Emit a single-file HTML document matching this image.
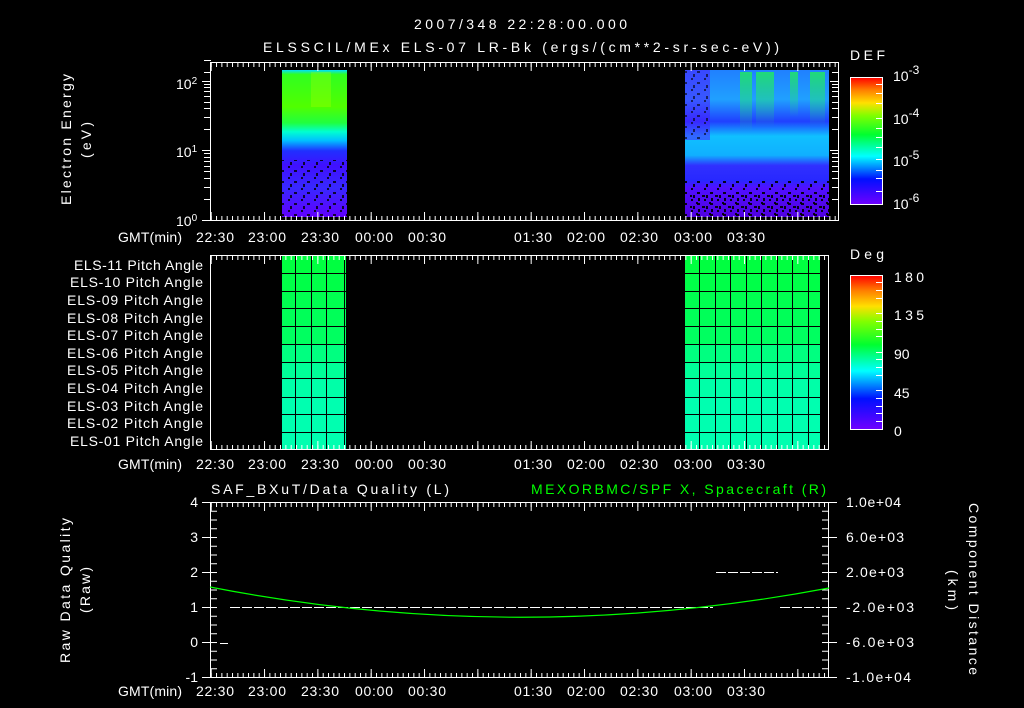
<!DOCTYPE html>
<html><head><meta charset="utf-8"><style>
html,body{margin:0;padding:0;background:#000;width:1024px;height:708px;overflow:hidden}
svg{display:block}
text{font-family:"Liberation Sans",sans-serif;fill:#fff;font-size:14px}
</style></head><body>
<svg width="1024" height="708" viewBox="0 0 1024 708" xmlns="http://www.w3.org/2000/svg">
<defs>
<linearGradient id="gL" x1="0" y1="0" x2="0" y2="1">
<stop offset="0" stop-color="#00e0ff"/><stop offset="0.03" stop-color="#30ff20"/>
<stop offset="0.25" stop-color="#50ff00"/><stop offset="0.36" stop-color="#20ff40"/>
<stop offset="0.42" stop-color="#00ffd0"/><stop offset="0.48" stop-color="#00c0ff"/>
<stop offset="0.55" stop-color="#2030ff"/><stop offset="0.65" stop-color="#4010ff"/>
<stop offset="0.8" stop-color="#3828ff"/><stop offset="1" stop-color="#6000ff"/>
</linearGradient>
<linearGradient id="gR" x1="0" y1="0" x2="0" y2="1">
<stop offset="0" stop-color="#2080ff"/><stop offset="0.2" stop-color="#20a0ff"/>
<stop offset="0.35" stop-color="#2040ff"/><stop offset="0.45" stop-color="#10c0ff"/>
<stop offset="0.58" stop-color="#10b0ff"/><stop offset="0.65" stop-color="#3030ff"/>
<stop offset="0.75" stop-color="#2828ff"/><stop offset="0.8" stop-color="#5010ff"/>
<stop offset="1" stop-color="#5000e0"/>
</linearGradient>
<linearGradient id="fade" x1="0" y1="0" x2="0" y2="1">
<stop offset="0" stop-color="#20ff40" stop-opacity="0.7"/><stop offset="1" stop-color="#20ff40" stop-opacity="0"/>
</linearGradient>
<linearGradient id="cb" x1="0" y1="1" x2="0" y2="0">
<stop offset="0" stop-color="#7000ff"/><stop offset="0.2" stop-color="#0010ff"/>
<stop offset="0.38" stop-color="#00ffff"/><stop offset="0.55" stop-color="#00ff30"/>
<stop offset="0.7" stop-color="#80ff00"/><stop offset="0.8" stop-color="#ffe000"/>
<stop offset="0.9" stop-color="#ff8000"/><stop offset="1" stop-color="#ff0000"/>
</linearGradient>
<pattern id="minX" x="210.7" y="0" width="5.333" height="10" patternUnits="userSpaceOnUse"><rect x="0" y="0" width="1" height="10" fill="#fff"/></pattern>
<pattern id="majX" x="210.7" y="0" width="53.33" height="20" patternUnits="userSpaceOnUse"><rect x="0" y="0" width="1" height="20" fill="#fff"/></pattern>
<pattern id="minY" x="0" y="502" width="10" height="8.75" patternUnits="userSpaceOnUse"><rect x="0" y="0" width="10" height="1" fill="#fff"/></pattern>
<pattern id="specks" x="0" y="0" width="13" height="11" patternUnits="userSpaceOnUse">
<rect x="2" y="1" width="2" height="2" fill="#000"/><rect x="8" y="5" width="3" height="2" fill="#000"/><rect x="4" y="8" width="2" height="3" fill="#000"/></pattern>
</defs>

<!-- Titles -->
<text x="414" y="29" font-size="16" textLength="213" lengthAdjust="spacing">2007/348 22:28:00.000</text>
<text x="263" y="52" font-size="16" textLength="516" lengthAdjust="spacing">ELSSCIL/MEx ELS-07 LR-Bk  (ergs/(cm**2-sr-sec-eV))</text>

<!-- Top panel data -->
<rect x="282" y="70" width="65" height="147" fill="url(#gL)"/>
<rect x="282" y="160" width="65" height="57" fill="url(#specks)" opacity="0.8"/>
<rect x="311" y="72" width="20" height="35" fill="#b0ff00" opacity="0.3"/>
<rect x="685" y="70" width="144" height="147" fill="url(#gR)"/>
<rect x="740" y="72" width="12" height="60" fill="url(#fade)"/>
<rect x="756" y="72" width="18" height="55" fill="url(#fade)"/>
<rect x="790" y="72" width="8" height="45" fill="url(#fade)"/>
<rect x="810" y="72" width="15" height="55" fill="url(#fade)"/>
<rect x="685" y="70" width="25" height="70" fill="#5010ff" opacity="0.5"/>
<rect x="685" y="70" width="25" height="70" fill="url(#specks)" opacity="0.6"/>
<rect x="685" y="180" width="144" height="37" fill="url(#specks)" opacity="0.9"/>
<rect x="685" y="190" width="144" height="27" fill="url(#specks)" opacity="0.9" transform="translate(5 3)"/>

<!-- Top panel frame -->
<rect x="210.5" y="62.5" width="628" height="158" fill="none" stroke="#fff"/>
<rect x="211" y="63" width="627" height="4" fill="url(#minX)"/>
<rect x="211" y="63" width="627" height="8" fill="url(#majX)"/>
<rect x="211" y="216" width="627" height="4" fill="url(#minX)"/>
<rect x="211" y="212" width="627" height="8" fill="url(#majX)"/>
<g stroke="#fff">
<path d="M202 220.5h9M202 150.5h9M202 81.5h9 M204 199.5h7M204 187.5h7M204 178.5h7M204 171.5h7M204 166.5h7M204 161.5h7M204 157.5h7M204 153.5h7 M204 129.5h7M204 117.5h7M204 108.5h7M204 102.5h7M204 96.5h7M204 91.5h7M204 87.5h7M204 84.5h7 M204 60.5h7M204 72.5h7"/>
<path d="M830 81.5h9M830 150.5h9M830 220.5h9 M832 199.5h7M832 187.5h7M832 178.5h7M832 171.5h7M832 166.5h7M832 161.5h7M832 157.5h7M832 153.5h7 M832 129.5h7M832 117.5h7M832 108.5h7M832 102.5h7M832 96.5h7M832 91.5h7M832 87.5h7M832 84.5h7M832 72.5h7"/>
</g>
<text x="176" y="89">10<tspan font-size="10" dy="-5">2</tspan></text>
<text x="176" y="157">10<tspan font-size="10" dy="-5">1</tspan></text>
<text x="176" y="226">10<tspan font-size="10" dy="-5">0</tspan></text>
<text transform="translate(71 140) rotate(-90)" x="-65" font-size="15" textLength="131" lengthAdjust="spacing">Electron Energy</text>
<text transform="translate(91 140) rotate(-90)" x="-18" font-size="15" textLength="36" lengthAdjust="spacing">(eV)</text>

<!-- time labels -->
<g id="tl" font-size="14">
<text x="118" y="242" textLength="64" lengthAdjust="spacing">GMT(min)</text>
<text x="196" y="242" textLength="38" lengthAdjust="spacing">22:30</text><text x="248" y="242" textLength="38" lengthAdjust="spacing">23:00</text><text x="301" y="242" textLength="38" lengthAdjust="spacing">23:30</text><text x="355" y="242" textLength="38" lengthAdjust="spacing">00:00</text><text x="408" y="242" textLength="38" lengthAdjust="spacing">00:30</text>
<text x="514" y="242" textLength="38" lengthAdjust="spacing">01:30</text><text x="567" y="242" textLength="38" lengthAdjust="spacing">02:00</text><text x="620" y="242" textLength="38" lengthAdjust="spacing">02:30</text><text x="674" y="242" textLength="38" lengthAdjust="spacing">03:00</text><text x="727" y="242" textLength="38" lengthAdjust="spacing">03:30</text>
</g>
<use href="#tl" y="227"/>
<use href="#tl" y="454"/>

<!-- DEF colorbar -->
<text x="850" y="60" font-size="17" textLength="35" lengthAdjust="spacing">DEF</text>
<rect x="850.5" y="77.5" width="32" height="127" fill="url(#cb)" stroke="#fff"/>
<g stroke="#fff"><path d="M876 84.5h6M876 93.5h6M876 103.5h6M876 118.5h6M876 128.5h6M876 137.5h6M876 147.5h6M876 159.5h6M876 170.5h6M876 178.5h6M876 191.5h6"/></g>
<g font-size="17"><text x="893" y="81">10<tspan font-size="12" dy="-7">-3</tspan></text>
<text x="893" y="124">10<tspan font-size="12" dy="-7">-4</tspan></text>
<text x="893" y="166">10<tspan font-size="12" dy="-7">-5</tspan></text>
<text x="893" y="209">10<tspan font-size="12" dy="-7">-6</tspan></text></g>

<!-- Middle panel -->
<g>
<rect x="282" y="256" width="64" height="18" fill="#00ff40"/><rect x="685" y="256" width="135" height="18" fill="#00ff40"/>
<rect x="282" y="273" width="64" height="18" fill="#00ff48"/><rect x="685" y="273" width="135" height="18" fill="#00ff48"/>
<rect x="282" y="291" width="64" height="18" fill="#00ff50"/><rect x="685" y="291" width="135" height="18" fill="#00ff50"/>
<rect x="282" y="308" width="64" height="18" fill="#00ff58"/><rect x="685" y="308" width="135" height="18" fill="#00ff58"/>
<rect x="282" y="326" width="64" height="18" fill="#00ff60"/><rect x="685" y="326" width="135" height="18" fill="#00ff60"/>
<rect x="282" y="344" width="64" height="18" fill="#00ff80"/><rect x="685" y="344" width="135" height="18" fill="#00ff80"/>
<rect x="282" y="362" width="64" height="18" fill="#00ff98"/><rect x="685" y="362" width="135" height="18" fill="#00ff98"/>
<rect x="282" y="378" width="64" height="19" fill="#00ffa8"/><rect x="685" y="378" width="135" height="19" fill="#00ffa8"/>
<rect x="282" y="397" width="64" height="18" fill="#00ffb0"/><rect x="685" y="397" width="135" height="18" fill="#00ffb0"/>
<rect x="282" y="414" width="64" height="18" fill="#00ffb0"/><rect x="685" y="414" width="135" height="18" fill="#00ffb0"/>
<rect x="282" y="432" width="64" height="17" fill="#00ffb0"/><rect x="685" y="432" width="135" height="17" fill="#00ffb0"/>
</g>
<g stroke="#000" stroke-width="1">
<path d="M282 273.5h64M282 291.5h64M282 308.5h64M282 326.5h64M282 344.5h64M282 362.5h64M282 378.5h64M282 397.5h64M282 414.5h64M282 432.5h64"/>
<path d="M685 273.5h135M685 291.5h135M685 308.5h135M685 326.5h135M685 344.5h135M685 362.5h135M685 378.5h135M685 397.5h135M685 414.5h135M685 432.5h135"/>
<path d="M295.5 256v193M311.5 256v193M326.5 256v193M344.5 256v193 M699.5 256v193M715.5 256v193M730.5 256v193M746.5 256v193M761.5 256v193M777.5 256v193M792.5 256v193M808.5 256v193"/>
</g>
<rect x="210.5" y="255.5" width="618" height="194" fill="none" stroke="#fff"/>
<rect x="211" y="256" width="617" height="4" fill="url(#minX)"/>
<rect x="211" y="256" width="617" height="8" fill="url(#majX)"/>
<rect x="211" y="445" width="617" height="4" fill="url(#minX)"/>
<rect x="211" y="441" width="617" height="8" fill="url(#majX)"/>
<g font-size="14">
<text x="74" y="270" textLength="129" lengthAdjust="spacing">ELS-11 Pitch Angle</text><text x="70" y="287" textLength="133" lengthAdjust="spacing">ELS-10 Pitch Angle</text>
<text x="67" y="305" textLength="136" lengthAdjust="spacing">ELS-09 Pitch Angle</text><text x="67" y="323" textLength="136" lengthAdjust="spacing">ELS-08 Pitch Angle</text>
<text x="67" y="340" textLength="136" lengthAdjust="spacing">ELS-07 Pitch Angle</text><text x="67" y="358" textLength="136" lengthAdjust="spacing">ELS-06 Pitch Angle</text>
<text x="67" y="375" textLength="136" lengthAdjust="spacing">ELS-05 Pitch Angle</text><text x="67" y="393" textLength="136" lengthAdjust="spacing">ELS-04 Pitch Angle</text>
<text x="67" y="411" textLength="136" lengthAdjust="spacing">ELS-03 Pitch Angle</text><text x="67" y="428" textLength="136" lengthAdjust="spacing">ELS-02 Pitch Angle</text>
<text x="70" y="446" textLength="133" lengthAdjust="spacing">ELS-01 Pitch Angle</text>
</g>
<!-- Deg colorbar -->
<text x="850" y="259" font-size="17" textLength="34" lengthAdjust="spacing">Deg</text>
<rect x="850.5" y="275.5" width="32" height="154" fill="url(#cb)" stroke="#fff"/>
<g stroke="#fff"><path d="M876 282.5h6M876 290.5h6M876 298.5h6M876 313.5h6M876 321.5h6M876 329.5h6M876 336.5h6M876 352.5h6M876 359.5h6M876 367.5h6M876 375.5h6M876 390.5h6M876 398.5h6M876 406.5h6M876 413.5h6M876 421.5h6"/></g>
<g font-size="17"><text x="894" y="282" textLength="30" lengthAdjust="spacing">180</text><text x="894" y="320" textLength="30" lengthAdjust="spacing">135</text><text x="894" y="359">90</text><text x="894" y="398">45</text><text x="894" y="436">0</text></g>

<!-- Bottom panel -->
<text x="211" y="494" font-size="16" textLength="238" lengthAdjust="spacing">SAF_BXuT/Data Quality (L)</text>
<text x="531" y="494" font-size="16" textLength="295" lengthAdjust="spacing" style="fill:#00ff00">MEXORBMC/SPF X, Spacecraft (R)</text>
<rect x="210.5" y="502.5" width="618" height="175" fill="none" stroke="#fff"/>
<rect x="211" y="503" width="617" height="4" fill="url(#minX)"/>
<rect x="211" y="503" width="617" height="8" fill="url(#majX)"/>
<rect x="211" y="673" width="617" height="4" fill="url(#minX)"/>
<rect x="211" y="669" width="617" height="8" fill="url(#majX)"/>
<rect x="211" y="502" width="6" height="176" fill="url(#minY)"/>
<rect x="822" y="502" width="6" height="176" fill="url(#minY)"/>
<g stroke="#fff"><path d="M202 502.5h9M202 537.5h9M202 572.5h9M202 607.5h9M202 642.5h9M202 677.5h9 M828 502.5h9M828 537.5h9M828 572.5h9M828 607.5h9M828 642.5h9M828 677.5h9"/></g>
<g text-anchor="end" font-size="14"><text x="198" y="507">4</text><text x="198" y="542">3</text><text x="198" y="577">2</text><text x="198" y="612">1</text><text x="198" y="647">0</text><text x="198" y="682">-1</text></g>
<g font-size="13"><text x="846" y="507" textLength="55" lengthAdjust="spacing">1.0e+04</text><text x="846" y="542" textLength="58" lengthAdjust="spacing">6.0e+03</text><text x="846" y="577" textLength="58" lengthAdjust="spacing">2.0e+03</text><text x="846" y="612" textLength="68" lengthAdjust="spacing">-2.0e+03</text><text x="846" y="647" textLength="68" lengthAdjust="spacing">-6.0e+03</text><text x="846" y="682" textLength="65" lengthAdjust="spacing">-1.0e+04</text></g>
<g stroke="#fff" stroke-dasharray="10 2"><path d="M230 607.5H713M716 572.5H778M780 607.5H820"/></g>
<path d="M220 643.5h8" stroke="#fff"/>
<path d="M210 587 Q517 647 829 588" fill="none" stroke="#00ff00" stroke-width="1.2"/>
<text transform="translate(70 590) rotate(-90)" x="-73" font-size="15" textLength="145" lengthAdjust="spacing">Raw Data Quality</text>
<text transform="translate(90 590) rotate(-90)" x="-23" font-size="15" textLength="46" lengthAdjust="spacing">(Raw)</text>
<text transform="translate(969 589) rotate(90)" x="-86" font-size="15" textLength="172" lengthAdjust="spacing">Component Distance</text>
<text transform="translate(948 590) rotate(90)" x="-20" font-size="15" textLength="40" lengthAdjust="spacing">(km)</text>
</svg>
</body></html>
